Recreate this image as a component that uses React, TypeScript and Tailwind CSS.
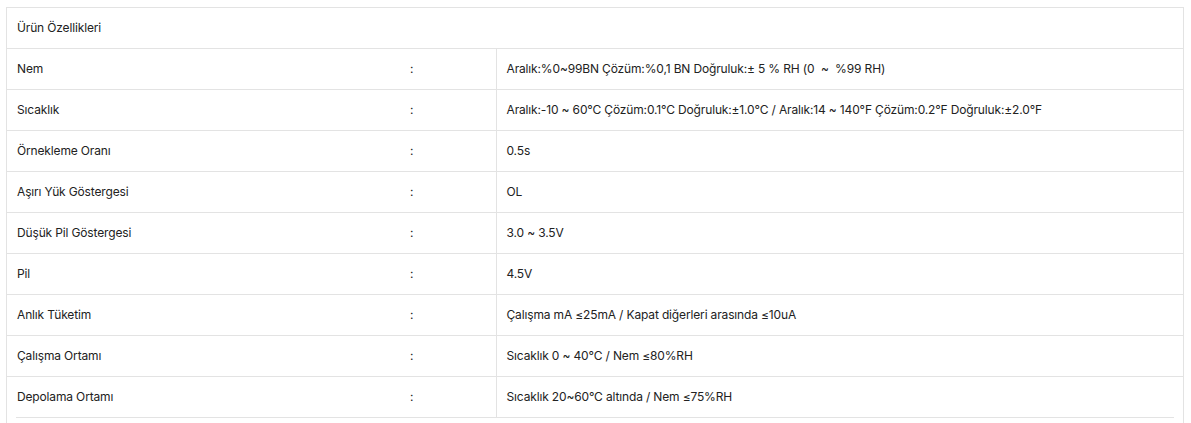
const rows: [string, string][] = [
  ["Nem", "Aralık:%0~99BN Çözüm:%0,1 BN Doğruluk:± 5 % RH (0  ~  %99 RH)"],
  [
    "Sıcaklık",
    "Aralık:-10 ~ 60°C Çözüm:0.1°C Doğruluk:±1.0°C / Aralık:14 ~ 140°F Çözüm:0.2°F Doğruluk:±2.0°F",
  ],
  ["Örnekleme Oranı", "0.5s"],
  ["Aşırı Yük Göstergesi", "OL"],
  ["Düşük Pil Göstergesi", "3.0 ~ 3.5V"],
  ["Pil", "4.5V"],
  ["Anlık Tüketim", "Çalışma mA ≤25mA / Kapat diğerleri arasında ≤10uA"],
  ["Çalışma Ortamı", "Sıcaklık 0 ~ 40°C / Nem ≤80%RH"],
  ["Depolama Ortamı", "Sıcaklık 20~60°C altında / Nem ≤75%RH"],
];

export default function App() {
  return (
    <div className="bg-white w-[1191px] h-[423px] overflow-hidden pl-[6px] pr-[7px] pt-[7px] font-['Inter',sans-serif] text-[12px] tracking-[-0.15px] text-[#222]">
      <div className="border-x border-t border-[#e3e3e3] h-full">
        <table className="w-full border-collapse">
          <thead>
            <tr className="h-[40px] border-b border-[#e3e3e3]">
              <th colSpan={3} className="text-left font-normal px-[10px]">
                Ürün Özellikleri
              </th>
            </tr>
          </thead>
          <tbody>
            {rows.map(([label, value], i) => (
              <tr
                key={label}
                className={
                  i < rows.length - 1
                    ? "h-[41px] border-b border-[#e3e3e3]"
                    : "h-[41px]"
                }
              >
                <td className="w-[393px] px-[10px]">{label}</td>
                <td className="w-[96px] px-[10px]">:</td>
                <td className="border-l border-[#e3e3e3] px-[10px] whitespace-pre">
                  {value}
                </td>
              </tr>
            ))}
          </tbody>
        </table>
        <div className="mx-[9px] border-t border-[#e3e3e3]" />
      </div>
    </div>
  );
}
